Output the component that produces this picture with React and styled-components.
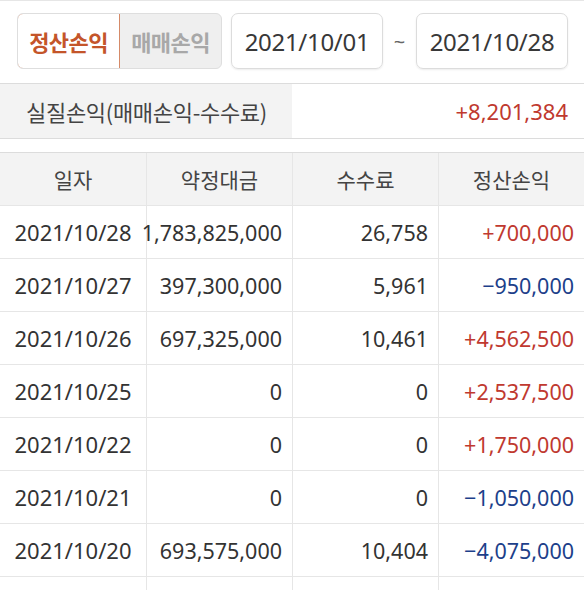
import styled, { createGlobalStyle } from "styled-components";

const GlobalStyle = createGlobalStyle`
  html, body {
    margin: 0;
    padding: 0;
    background: #fff;
  }
  body {
    font-family: "Noto Sans", "Noto Sans CJK KR", sans-serif;
    color: #333;
    overflow: hidden;
  }
`;

const Page = styled.div`
  width: 584px;
  height: 590px;
  overflow: hidden;
  border-top: 1px solid #e6e6e6;
  box-sizing: border-box;
`;

const FilterBar = styled.div`
  display: flex;
  align-items: center;
  padding: 12px 0 0 17px;
  height: 56px;
`;

const Toggle = styled.div`
  display: flex;
  width: 205px;
  height: 56px;
  border-radius: 6px;
  overflow: hidden;
  background: #efefef;
  border: 1px solid #dedede;
  box-sizing: border-box;
`;

const ToggleButton = styled.div`
  flex: 1;
  display: flex;
  align-items: center;
  justify-content: center;
  font-family: "Noto Sans CJK KR", sans-serif;
  font-size: 22px;
  font-weight: 700;
  letter-spacing: -0.6px;
  color: ${(p) => (p.$active ? "#c4552a" : "#a8a8a8")};
  background: ${(p) => (p.$active ? "#fff" : "transparent")};
  border: ${(p) => (p.$active ? "1px solid #d58a68" : "none")};
  border-radius: ${(p) => (p.$active ? "6px 0 0 6px" : "0")};
  margin: ${(p) => (p.$active ? "-1px 0 -1px -1px" : "0")};
`;

const DateBox = styled.div`
  width: 152px;
  height: 56px;
  box-sizing: border-box;
  border: 1px solid #dcdcdc;
  border-radius: 7px;
  box-shadow: 0 1px 2px rgba(0, 0, 0, 0.08);
  display: flex;
  align-items: center;
  justify-content: center;
  font-size: 24px;
  letter-spacing: -0.3px;
  color: #383838;
  margin-left: ${(p) => p.$gap || 0}px;
`;

const Tilde = styled.span`
  width: 33px;
  text-align: center;
  font-size: 20px;
  color: #666;
`;

const SummaryRow = styled.div`
  display: grid;
  grid-template-columns: 292px 1fr;
  height: 54px;
  margin-top: 14px;
  border-top: 1px solid #dcdcdc;
  border-bottom: 1px solid #dcdcdc;
`;

const SummaryLabel = styled.div`
  background: #f3f3f3;
  display: flex;
  align-items: center;
  padding-left: 26px;
  font-family: "Noto Sans CJK KR", sans-serif;
  font-size: 22px;
  color: #444;
  letter-spacing: -0.3px;
`;

const SummaryValue = styled.div`
  display: flex;
  align-items: center;
  justify-content: flex-end;
  padding-right: 16px;
  font-size: 22px;
  color: #c0392f;
`;

const Table = styled.div`
  margin-top: 13px;
  border-top: 1px solid #dcdcdc;
`;

const Row = styled.div`
  display: grid;
  grid-template-columns: repeat(4, 146px);
  height: 53px;
  border-bottom: 1px solid #e6e6e6;
  box-sizing: border-box;
  background: ${(p) => (p.$head ? "#f3f3f3" : "#fff")};
`;

const Cell = styled.div`
  display: flex;
  align-items: center;
  justify-content: ${(p) => (p.$align === "right" ? "flex-end" : "center")};
  padding-right: ${(p) => (p.$align === "right" ? "10px" : "0")};
  border-left: ${(p) => (p.$first ? "none" : "1px solid #e6e6e6")};
  font-size: ${(p) => (p.$head ? "21px" : p.$first ? "22px" : "21.5px")};
  font-family: ${(p) =>
    p.$head ? '"Noto Sans CJK KR", sans-serif' : '"Noto Sans", sans-serif'};
  color: ${(p) =>
    p.$tone === "up" ? "#c0392f" : p.$tone === "down" ? "#1d3f8a" : p.$head ? "#444" : "#333"};
  white-space: nowrap;
`;

const rows = [
  ["2021/10/28", "1,783,825,000", "26,758", "+700,000"],
  ["2021/10/27", "397,300,000", "5,961", "\u2212950,000"],
  ["2021/10/26", "697,325,000", "10,461", "+4,562,500"],
  ["2021/10/25", "0", "0", "+2,537,500"],
  ["2021/10/22", "0", "0", "+1,750,000"],
  ["2021/10/21", "0", "0", "\u22121,050,000"],
  ["2021/10/20", "693,575,000", "10,404", "\u22124,075,000"],
  ["", "", "", ""],
];

export default function App() {
  return (
    <Page>
      <GlobalStyle />
      <FilterBar>
        <Toggle>
          <ToggleButton $active>정산손익</ToggleButton>
          <ToggleButton>매매손익</ToggleButton>
        </Toggle>
        <DateBox $gap={9}>2021/10/01</DateBox>
        <Tilde>~</Tilde>
        <DateBox>2021/10/28</DateBox>
      </FilterBar>

      <SummaryRow>
        <SummaryLabel>실질손익(매매손익-수수료)</SummaryLabel>
        <SummaryValue>+8,201,384</SummaryValue>
      </SummaryRow>

      <Table>
        <Row $head>
          <Cell $head $first>일자</Cell>
          <Cell $head>약정대금</Cell>
          <Cell $head>수수료</Cell>
          <Cell $head>정산손익</Cell>
        </Row>
        {rows.map((r, i) => (
          <Row key={i}>
            <Cell $first>{r[0]}</Cell>
            <Cell $align="right">{r[1]}</Cell>
            <Cell $align="right">{r[2]}</Cell>
            <Cell
              $align="right"
              $tone={r[3].startsWith("+") ? "up" : r[3] ? "down" : undefined}
            >
              {r[3]}
            </Cell>
          </Row>
        ))}
      </Table>
    </Page>
  );
}
